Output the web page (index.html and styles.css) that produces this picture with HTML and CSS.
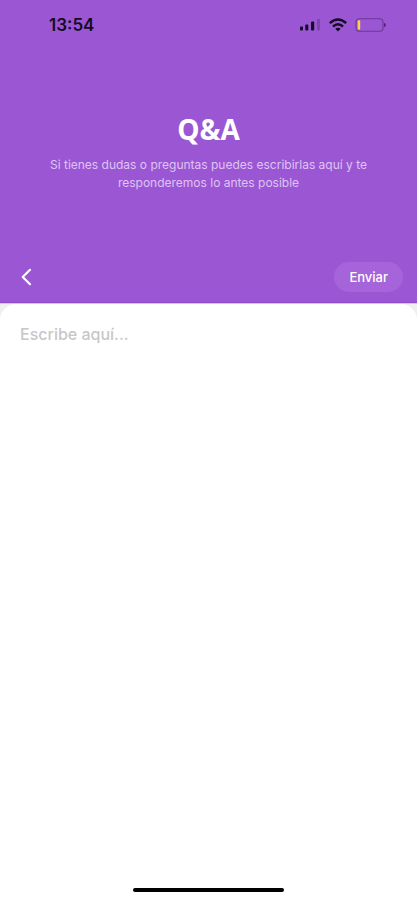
FILE: index.html
```html
<!DOCTYPE html>
<html lang="es">
<head>
<meta charset="utf-8">
<meta name="viewport" content="width=device-width, initial-scale=1">
<title>Q&amp;A</title>
<link rel="stylesheet" href="styles.css">
</head>
<body>
<form class="screen">
  <header class="header">
    <div class="status">
      <time class="clock">13:54</time>
      <div class="indicators">
        <svg class="signal" width="22" height="12" viewBox="0 0 22 12" aria-hidden="true">
          <rect x="1" y="7.5" width="3" height="4" rx="1"/>
          <rect x="6.3" y="5.5" width="3" height="6" rx="1"/>
          <rect x="12" y="2.5" width="3.2" height="9" rx="1"/>
          <rect x="18" y="0" width="3" height="11.5" rx="1" opacity=".22"/>
        </svg>
        <svg class="wifi" width="20" height="14" viewBox="0 0 20 14" aria-hidden="true">
          <path d="M1.8 5.1Q10-2.2 18.2 5.1M5 8.5Q10 4 15 8.5" fill="none" stroke="currentColor" stroke-width="2.4"/>
          <path d="M7.3 10.8Q10 8.7 12.7 10.8L10 13.6Z"/>
        </svg>
        <svg class="battery" width="32" height="14" viewBox="0 0 32 14" aria-hidden="true">
          <rect x="1" y=".7" width="27" height="12.6" rx="3.5" fill="none" stroke="#693894" stroke-width="1.1"/>
          <rect x="2.7" y="2.2" width="2.5" height="9.6" rx="1" fill="#ffd04f"/>
          <path d="M29 4.8Q31 5.5 31 7T29 9.2Z" fill="#522873"/>
        </svg>
      </div>
    </div>
    <div class="intro">
      <h1>Q&amp;A</h1>
      <p>Si tienes dudas o preguntas puedes escribirlas aquí y te responderemos lo antes posible</p>
    </div>
    <div class="actions">
      <button class="back" type="button" aria-label="Volver">
        <svg width="12" height="18" viewBox="0 0 12 18" aria-hidden="true"><path d="M10 1.8 2.7 9l7.3 7.2" fill="none" stroke="currentColor" stroke-width="2.2" stroke-linecap="round" stroke-linejoin="round"/></svg>
      </button>
      <button class="send" type="submit">Enviar</button>
    </div>
  </header>
  <main class="sheet">
    <textarea class="question" aria-label="Pregunta" placeholder="Escribe aquí..."></textarea>
    <div class="home-bar"></div>
  </main>
</form>
</body>
</html>
```
FILE: styles.css
```css
* { box-sizing: border-box; }
body {
  margin: 0;
  background: #f0f0f3;
  font-family: "Open Sans", sans-serif;
}
.screen {
  display: flex;
  flex-direction: column;
  min-height: 100vh;
}
.header {
  background: #9b57d3;
  color: #fff;
  border-bottom: 1px solid #8f4bcb;
  box-shadow: 0 1px 0 #dcc2ef;
}
.status {
  display: flex;
  justify-content: space-between;
  align-items: center;
  height: 50px;
  padding: 0 30px 0 49px;
  color: #150b20;
}
.clock {
  font: 600 17px/20px Inter, sans-serif;
}
.indicators {
  display: flex;
  align-items: center;
  gap: 7px;
}
.indicators svg { fill: currentColor; }
.intro {
  padding: 60px 40px 0;
  text-align: center;
}
h1 {
  margin: 0;
  font: 700 28px/38px "Open Sans", sans-serif;
}
p {
  margin: 8px 0 0;
  color: #dfc3f3;
  font: 400 12px/18px Inter, sans-serif;
}
.actions {
  display: flex;
  justify-content: space-between;
  align-items: center;
  padding: 70px 14px 10px 20px;
}
button {
  border: 0;
  padding: 0;
  color: #fff;
  background: none;
}
.back { display: flex; }
.send {
  padding: 0 15px;
  border-radius: 15px;
  background: #a564d9;
  font: 500 13px/30px Inter, sans-serif;
}
.sheet {
  display: flex;
  flex: 1;
  flex-direction: column;
  align-items: center;
  margin-top: 1px;
  padding-bottom: 8px;
  border-radius: 16px 16px 0 0;
  background: #fff;
}
.question {
  flex: 1;
  width: 100%;
  padding: 19px 20px;
  border: 0;
  outline: 0;
  resize: none;
  background: none;
  color: #333;
  font: 500 16px/22px Inter, sans-serif;
}
.question::placeholder { color: #c7c7c9; opacity: 1; }
.home-bar {
  width: 36%;
  height: 4px;
  border-radius: 2px;
  background: #000;
}
```
